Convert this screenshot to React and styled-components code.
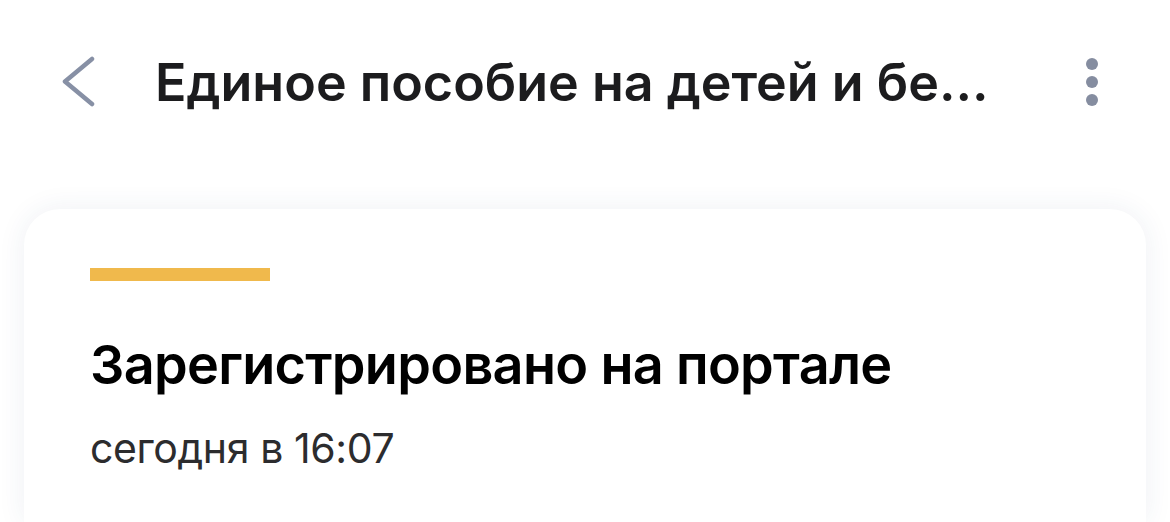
import React from "react";
import styled, { createGlobalStyle } from "styled-components";

const Global = createGlobalStyle`
  html, body { margin: 0; padding: 0; background: #ffffff; }
  body { font-family: Inter, "Noto Sans", "Liberation Sans", sans-serif; -webkit-font-smoothing: antialiased; }
`;

const Page = styled.div`
  width: 1170px;
  height: 522px;
  overflow: hidden;
  background: #ffffff;
  display: flex;
  flex-direction: column;
`;

const Header = styled.header`
  height: 164px;
  display: flex;
  align-items: center;
  padding: 0 50px 0 60px;
  box-sizing: border-box;
`;

const BackButton = styled.button`
  width: 40px;
  height: 56px;
  padding: 0;
  border: 0;
  background: none;
  display: flex;
  align-items: center;
  justify-content: flex-start;
  margin-right: 55px;
`;

const Title = styled.h1`
  flex: 1;
  margin: 0;
  font-size: 52px;
  font-weight: 600;
  color: #1c1c1e;
  letter-spacing: 0px;
  white-space: nowrap;
`;

const MenuButton = styled.button`
  width: 24px;
  height: 56px;
  padding: 0;
  border: 0;
  background: none;
  display: flex;
  flex-direction: column;
  align-items: center;
  justify-content: center;
  gap: 6px;
  margin-right: 16px;
`;

const Dot = styled.span`
  width: 12px;
  height: 12px;
  border-radius: 50%;
  background: #858da0;
`;

const Card = styled.section`
  margin: 45px 24px 0 24px;
  flex: 1;
  background: #ffffff;
  border-radius: 36px 36px 0 0;
  box-shadow: 0 0 28px rgba(40, 60, 120, 0.08);
  padding: 59px 66px 0 66px;
  display: flex;
  flex-direction: column;
  align-items: flex-start;
`;

const StatusBar = styled.div`
  width: 180px;
  height: 13px;
  background: ${(p) => p.$color};
`;

const StatusTitle = styled.h2`
  margin: 52px 0 0 0;
  font-size: 54px;
  font-weight: 600;
  color: #000000;
  letter-spacing: -0.7px;
  line-height: 1.2;
`;

const StatusDate = styled.div`
  margin-top: 26px;
  font-size: 41px;
  font-weight: 400;
  color: #2c2c2e;
  letter-spacing: -0.4px;
  line-height: 1.2;
`;

const ChevronLeft = () => (
  <svg width="36" height="52" viewBox="0 0 36 52" fill="none">
    <path d="M32 3 L5 25.5 L32 48" stroke="#8790a5" strokeWidth="4.5" strokeLinecap="round" strokeLinejoin="round" />
  </svg>
);

export default function App() {
  return (
    <>
      <Global />
      <Page>
        <Header>
          <BackButton aria-label="Назад">
            <ChevronLeft />
          </BackButton>
          <Title>Единое пособие на детей и бе...</Title>
          <MenuButton aria-label="Меню">
            <Dot />
            <Dot />
            <Dot />
          </MenuButton>
        </Header>
        <Card>
          <StatusBar $color="#f0b94c" />
          <StatusTitle>Зарегистрировано на портале</StatusTitle>
          <StatusDate>сегодня в 16:07</StatusDate>
        </Card>
      </Page>
    </>
  );
}
